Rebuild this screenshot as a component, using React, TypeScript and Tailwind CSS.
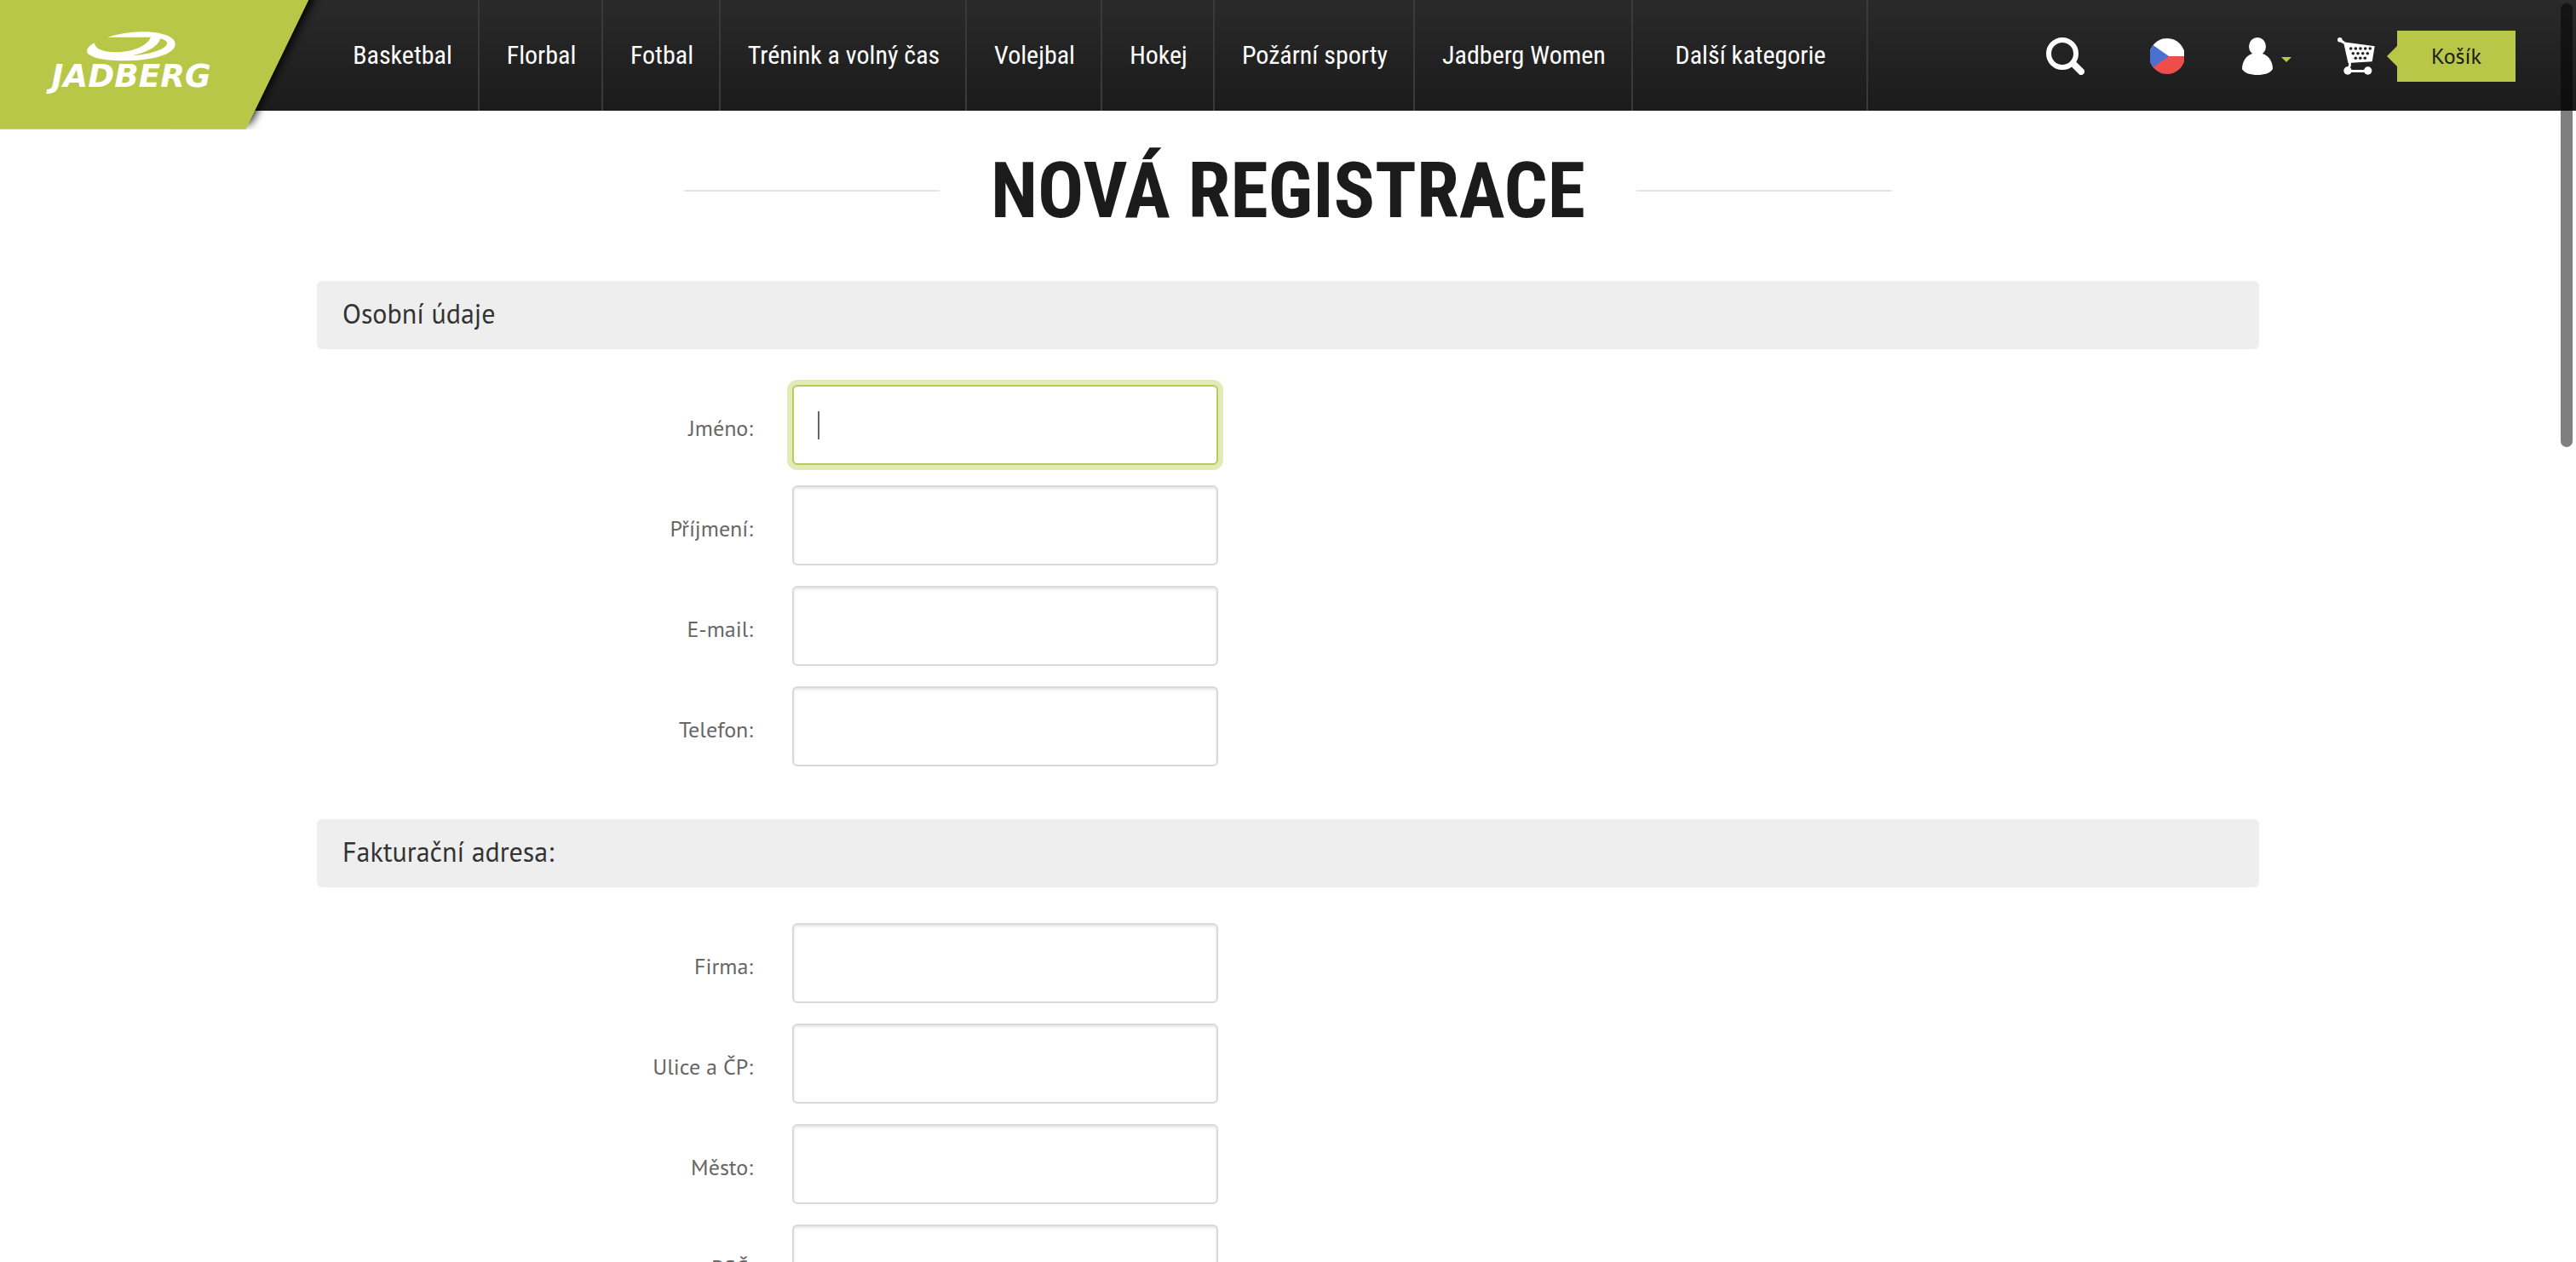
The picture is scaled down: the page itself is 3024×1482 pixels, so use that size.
const navItems = [
  { label: "Basketbal", width: "w-[181px]" },
  { label: "Florbal", width: "w-[145px]" },
  { label: "Fotbal", width: "w-[138px]" },
  { label: "Trénink a volný čas", width: "w-[289px]" },
  { label: "Volejbal", width: "w-[159px]" },
  { label: "Hokej", width: "w-[132px]" },
  { label: "Požární sporty", width: "w-[235px]" },
  { label: "Jadberg Women", width: "w-[256px]" },
  { label: "Další kategorie", width: "w-[276px]" },
];

const personalFields = [
  { id: "firstName", label: "Jméno:", type: "text", active: true },
  { id: "lastName", label: "Příjmení:", type: "text" },
  { id: "email", label: "E-mail:", type: "email" },
  { id: "phone", label: "Telefon:", type: "tel" },
];

const billingFields = [
  { id: "company", label: "Firma:", type: "text" },
  { id: "street", label: "Ulice a ČP:", type: "text" },
  { id: "city", label: "Město:", type: "text" },
  { id: "zip", label: "PSČ:", type: "text" },
];

type FieldProps = { id: string; label: string; type: string; active?: boolean };

function Logo() {
  return (
    <a href="#" aria-label="Jadberg" className="h-[130px] w-[382px] shrink-0">
      <svg viewBox="0 0 1089 453" className="h-[151px] w-[363px] overflow-visible">
        <defs>
          <filter id="logoShadow" x="-10%" y="-10%" width="130%" height="130%">
            <feGaussianBlur stdDeviation="16" />
          </filter>
          <clipPath id="below">
            <rect x="0" y="0" width="1200" height="456" />
          </clipPath>
        </defs>
        <g clipPath="url(#below)">
          <path d="M600 -80H1144L880 436H600Z" fill="#000" filter="url(#logoShadow)" />
        </g>
        <path d="M0 0H1087L866 455H0Z" fill="#b8c747" />
        <path
          fill="#fff"
          fillRule="evenodd"
          d="M378 131C420 118 465 111 505 112C565 113 617 127 617 155C617 192 535 214 432 214C362 214 306 200 306 180C306 170 315 160 333 151C333 172 362 185 412 184C472 182 519 160 531 131ZM565 136C557 163 520 185 467 195C530 192 588 172 588 152C588 145 580 140 565 136Z"
        />
        <text
          x="462"
          y="306"
          textAnchor="middle"
          fill="#fff"
          fontFamily="'DejaVu Sans', sans-serif"
          fontWeight="bold"
          fontStyle="italic"
          fontSize="112"
        >
          JADBERG
        </text>
      </svg>
    </a>
  );
}

function SearchIcon() {
  return (
    <svg viewBox="0 0 45 44" className="h-11 w-[45px]" fill="none" stroke="#fff" strokeLinecap="round">
      <circle cx="19" cy="19" r="16" strokeWidth="6" />
      <path d="M32 31L41 40" strokeWidth="8" />
    </svg>
  );
}

function FlagIcon() {
  return (
    <svg viewBox="0 0 40 42" className="h-[42px] w-10">
      <defs>
        <clipPath id="flagDisc">
          <circle cx="20" cy="21" r="21" />
        </clipPath>
      </defs>
      <g clipPath="url(#flagDisc)">
        <path d="M0 0H40V21H0Z" fill="#fff" />
        <path d="M0 21H40V42H0Z" fill="#ee4d4c" />
        <path d="M-8 0L22 21L-8 42Z" fill="#4a70d1" />
      </g>
    </svg>
  );
}

function UserIcon() {
  return (
    <svg viewBox="0 0 36 44" className="h-11 w-9" fill="#fff">
      <ellipse cx="18" cy="10.5" rx="10" ry="10.5" />
      <path d="M12 19C5 21 0 28 0 37C3 42 10 44 18 44C26 44 33 42 36 37C36 28 31 21 24 19Z" />
    </svg>
  );
}

function CartIcon() {
  return (
    <svg viewBox="0 0 44 44" className="size-11">
      <g fill="#fff" stroke="#fff">
        <circle cx="2.8" cy="2.8" r="2.8" stroke="none" />
        <path d="M3 3L8 6.5" strokeWidth="3" />
        <path d="M7 5.3L43.7 10.3L40.7 28.3L12.5 30Z" stroke="none" />
        <path d="M14.5 29L14.5 33L12 38M12 39.5H36" fill="none" strokeWidth="2.8" />
        <circle cx="12" cy="39" r="4.7" stroke="none" />
        <circle cx="35.7" cy="39" r="4.7" stroke="none" />
      </g>
      <g fill="#232323">
        {[15.7, 21.3, 27, 32.7, 38.3].map((x) => (
          <circle key={x} cx={x} cy="13" r="1.8" />
        ))}
        {[18.3, 24, 29.7, 35.3].map((x) => (
          <circle key={x} cx={x} cy="18.7" r="1.8" />
        ))}
        {[21.3, 26.8, 32.3].map((x) => (
          <circle key={x} cx={x} cy="24.3" r="1.8" />
        ))}
      </g>
    </svg>
  );
}

function Header() {
  return (
    <header className="relative z-10 flex h-[130px] items-center bg-linear-to-b from-[#2a2a2a] to-[#1b1b1b]">
      <Logo />
      <nav className="flex h-full font-['Roboto_Condensed',Roboto,sans-serif] text-[30px] text-white">
        {navItems.map((item) => (
          <a
            key={item.label}
            href="#"
            className={`flex h-full items-center justify-center border-r-2 border-[#3a3a3a] pb-0.5 pl-0.5 whitespace-nowrap ${item.width}`}
          >
            {item.label}
          </a>
        ))}
      </nav>
      <div className="ml-auto flex items-center pt-0.5 pr-[71px]">
        <button type="button" aria-label="Hledat" className="mr-[77px]">
          <SearchIcon />
        </button>
        <button type="button" aria-label="Čeština" className="mr-[68px]">
          <FlagIcon />
        </button>
        <button type="button" aria-label="Můj účet" className="mr-[54px] flex items-center gap-2.5">
          <UserIcon />
          <svg viewBox="0 0 12 6" className="mt-2 h-1.5 w-3">
            <path d="M0 0H12L6 6Z" fill="#b8c747" />
          </svg>
        </button>
        <a href="#" aria-label="Nákupní košík" className="mr-3.5">
          <CartIcon />
        </a>
        <a href="#" className="flex items-center">
          <svg viewBox="0 0 12 24" className="h-6 w-3">
            <path d="M12 0V24L0 12Z" fill="#b8c747" />
          </svg>
          <span className="flex h-[60px] w-[139px] items-center justify-center bg-[#b8c747] pb-0.5 text-[26px] text-[#1a1a1a]">
            Košík
          </span>
        </a>
      </div>
    </header>
  );
}

function Field({ id, label, type, active }: FieldProps) {
  return (
    <div className="flex items-start gap-[46px]">
      <label htmlFor={id} className="w-[512px] pt-[33px] text-right text-[26px] leading-9 text-[#666]">
        {label}
      </label>
      <div className="relative">
        <input
          id={id}
          name={id}
          type={type}
          className={
            active
              ? "h-[94px] w-[500px] rounded-md border-2 border-[#b8c95c] bg-white px-7 text-[26px] text-[#555] caret-transparent ring-6 ring-[#e2ebb8] outline-none"
              : "h-[94px] w-[500px] rounded-md border-2 border-[#d9d9d9] bg-white px-7 text-[26px] text-[#555] inset-shadow-[0_2px_3px_rgba(0,0,0,0.1)] outline-none"
          }
        />
        {active && <span className="absolute top-[31px] left-[30px] h-[33px] w-0.5 bg-[#666]" />}
      </div>
    </div>
  );
}

function Section({ title, fields }: { title: string; fields: FieldProps[] }) {
  return (
    <section className="mb-[62px]">
      <h2 className="mb-[42px] rounded-md bg-[#eee] px-[30px] pt-5 pb-6 text-[32px] leading-9 text-[#333]">{title}</h2>
      <div className="flex flex-col gap-6">
        {fields.map((field) => (
          <Field key={field.id} {...field} />
        ))}
      </div>
    </section>
  );
}

export default function App() {
  return (
    <div className="h-screen overflow-hidden bg-white font-['PT_Sans','Noto_Sans',sans-serif]">
      <Header />
      <main className="mx-auto w-full max-w-[2280px]">
        <div className="mt-11 mb-14 flex items-center justify-center gap-[60px]">
          <div className="h-0.5 w-[300px] bg-[#e5e5e5]" />
          <h1 className="pt-0.5 font-['Roboto_Condensed',Roboto,sans-serif] text-[90px] leading-[98px] font-bold whitespace-nowrap text-[#1b1b1b]">
            NOVÁ REGISTRACE
          </h1>
          <div className="h-0.5 w-[300px] bg-[#e5e5e5]" />
        </div>
        <form>
          <Section title="Osobní údaje" fields={personalFields} />
          <Section title="Fakturační adresa:" fields={billingFields} />
        </form>
      </main>
      <div className="fixed top-1 right-1 z-20 h-[521px] w-3.5 rounded-full bg-black/50" />
    </div>
  );
}
